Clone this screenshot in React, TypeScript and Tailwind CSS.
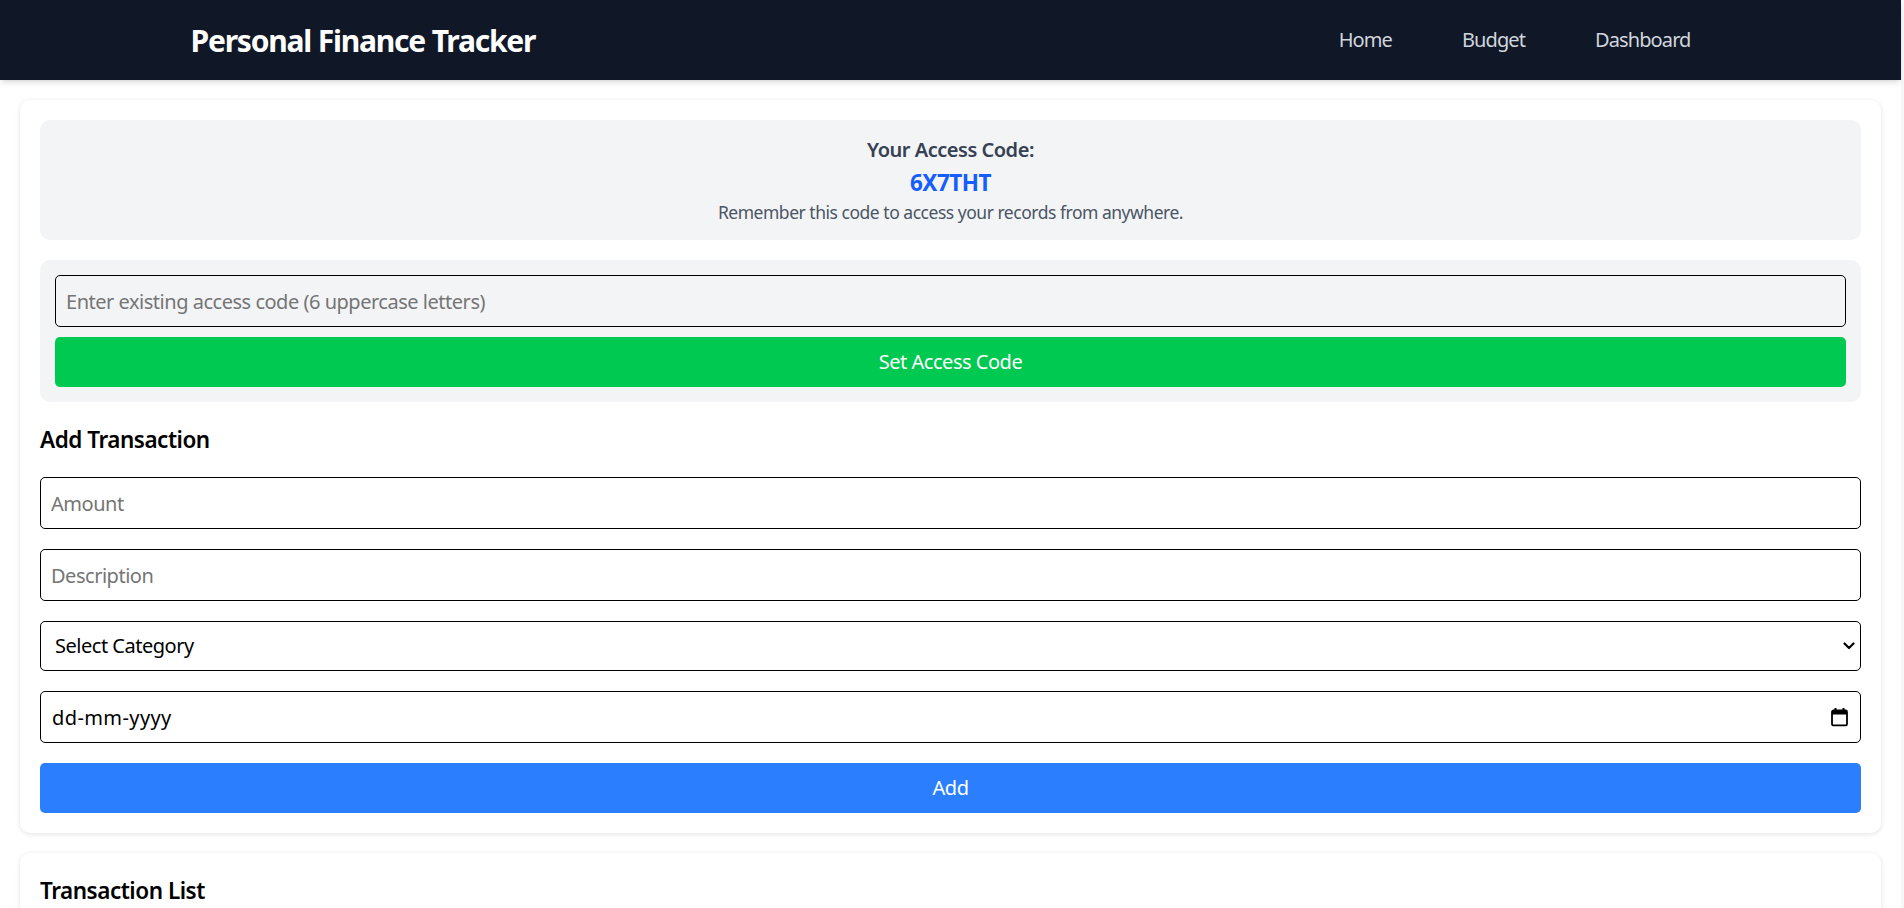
import { useState } from 'react';

const NAV_LINKS = ['Home', 'Budget', 'Dashboard'];

function CalendarIcon() {
  return (
    <svg width="17" height="19" viewBox="0 0 17 19" fill="none" className="text-black">
      <rect x="1" y="3" width="15" height="15" rx="1.5" stroke="currentColor" strokeWidth="1.8" />
      <rect x="1" y="3" width="15" height="4" fill="currentColor" />
      <rect x="3.5" y="0.5" width="2" height="3.5" fill="currentColor" />
      <rect x="11.5" y="0.5" width="2" height="3.5" fill="currentColor" />
    </svg>
  );
}

function ChevronDown() {
  return (
    <svg width="12" height="8" viewBox="0 0 12 8" fill="none">
      <path d="M1.5 1.5 6 6l4.5-4.5" stroke="black" strokeWidth="2.2" strokeLinecap="round" strokeLinejoin="round" />
    </svg>
  );
}

export default function App() {
  const [code, setCode] = useState('');
  const [amount, setAmount] = useState('');
  const [description, setDescription] = useState('');
  const [category, setCategory] = useState('');
  const [date, setDate] = useState('');

  const fieldClass =
    'h-[52px] w-full rounded-[5px] border border-black bg-white px-[10px] text-[20px] text-black placeholder:text-[#757575] focus:outline-none';

  return (
    <div className="min-h-screen bg-[#f7f7f7] font-['Noto_Sans',sans-serif] tracking-[-0.03em]">
      <div className="min-h-screen w-[1901px] bg-white">
        {/* NAVBAR */}
        <nav className="h-20 bg-gray-900 shadow-md">
          <div className="mx-auto flex h-full max-w-[1600px] items-center justify-between px-10">
            <h1 className="text-[30px] font-bold tracking-[-0.04em] text-white">Personal Finance Tracker</h1>
            <ul className="flex gap-[30px]">
              {NAV_LINKS.map((link) => (
                <li key={link}>
                  <a href="#" className="px-5 text-[20px] tracking-[-0.045em] text-gray-300">
                    {link}
                  </a>
                </li>
              ))}
            </ul>
          </div>
        </nav>

        <main className="flex flex-col gap-5 p-5">
          {/* ACCESS CODE + FORM */}
          <section className="rounded-[10px] bg-white p-5 shadow-[0_1px_5px_rgba(0,0,0,0.12)]">
            <div className="mb-5 rounded-[10px] bg-gray-100 p-[15px] text-center">
              <p className="text-[20px] leading-[30px] font-semibold text-gray-700">Your Access Code:</p>
              <p className="text-[22.5px] leading-[35px] font-bold text-blue-600">6X7THT</p>
              <p className="text-[17.5px] leading-[25px] text-gray-600">
                Remember this code to access your records from anywhere.
              </p>
            </div>

            <div className="mb-5 flex flex-col gap-[10px] rounded-[10px] bg-gray-100 p-[15px]">
              <input
                value={code}
                onChange={(e) => setCode(e.target.value)}
                placeholder="Enter existing access code (6 uppercase letters)"
                className="h-[52px] w-full rounded-[5px] border border-black bg-gray-100 px-[10px] text-[20px] placeholder:text-[#757575] focus:outline-none"
              />
              <button className="h-[50px] w-full rounded-[5px] bg-green-500 text-[20px] text-white">
                Set Access Code
              </button>
            </div>

            <h2 className="mb-5 text-[22.5px] leading-[35px] font-semibold text-black">Add Transaction</h2>

            <form className="flex flex-col gap-5" onSubmit={(e) => e.preventDefault()}>
              <input
                value={amount}
                onChange={(e) => setAmount(e.target.value)}
                placeholder="Amount"
                className={fieldClass}
              />
              <input
                value={description}
                onChange={(e) => setDescription(e.target.value)}
                placeholder="Description"
                className={fieldClass}
              />
              <div className="relative">
                <select
                  value={category}
                  onChange={(e) => setCategory(e.target.value)}
                  className="h-[50px] w-full appearance-none rounded-[5px] border border-black bg-white px-[14px] text-[20px] text-black focus:outline-none"
                >
                  <option value="">Select Category</option>
                  <option value="food">Food</option>
                  <option value="rent">Rent</option>
                  <option value="travel">Travel</option>
                </select>
                <span className="pointer-events-none absolute top-1/2 right-[6px] -translate-y-1/2">
                  <ChevronDown />
                </span>
              </div>
              <div className="relative">
                <input
                  value={date}
                  onChange={(e) => setDate(e.target.value)}
                  placeholder="dd-mm-yyyy"
                  className="h-[52px] w-full rounded-[5px] border border-black bg-white px-[11px] text-[20px] tracking-[0.02em] text-black placeholder:text-black focus:outline-none"
                />
                <span className="pointer-events-none absolute top-1/2 right-[13px] -translate-y-1/2">
                  <CalendarIcon />
                </span>
              </div>
              <button type="submit" className="h-[50px] w-full rounded-[5px] bg-blue-500 text-[20px] text-white">
                Add
              </button>
            </form>
          </section>

          {/* TRANSACTION LIST */}
          <section className="rounded-[10px] bg-white p-5 shadow-[0_1px_5px_rgba(0,0,0,0.12)]">
            <h2 className="mb-5 text-[22.5px] leading-[35px] font-semibold text-black">Transaction List</h2>
            <p className="text-[20px] text-gray-500">No transactions yet.</p>
          </section>
        </main>
      </div>
    </div>
  );
}
